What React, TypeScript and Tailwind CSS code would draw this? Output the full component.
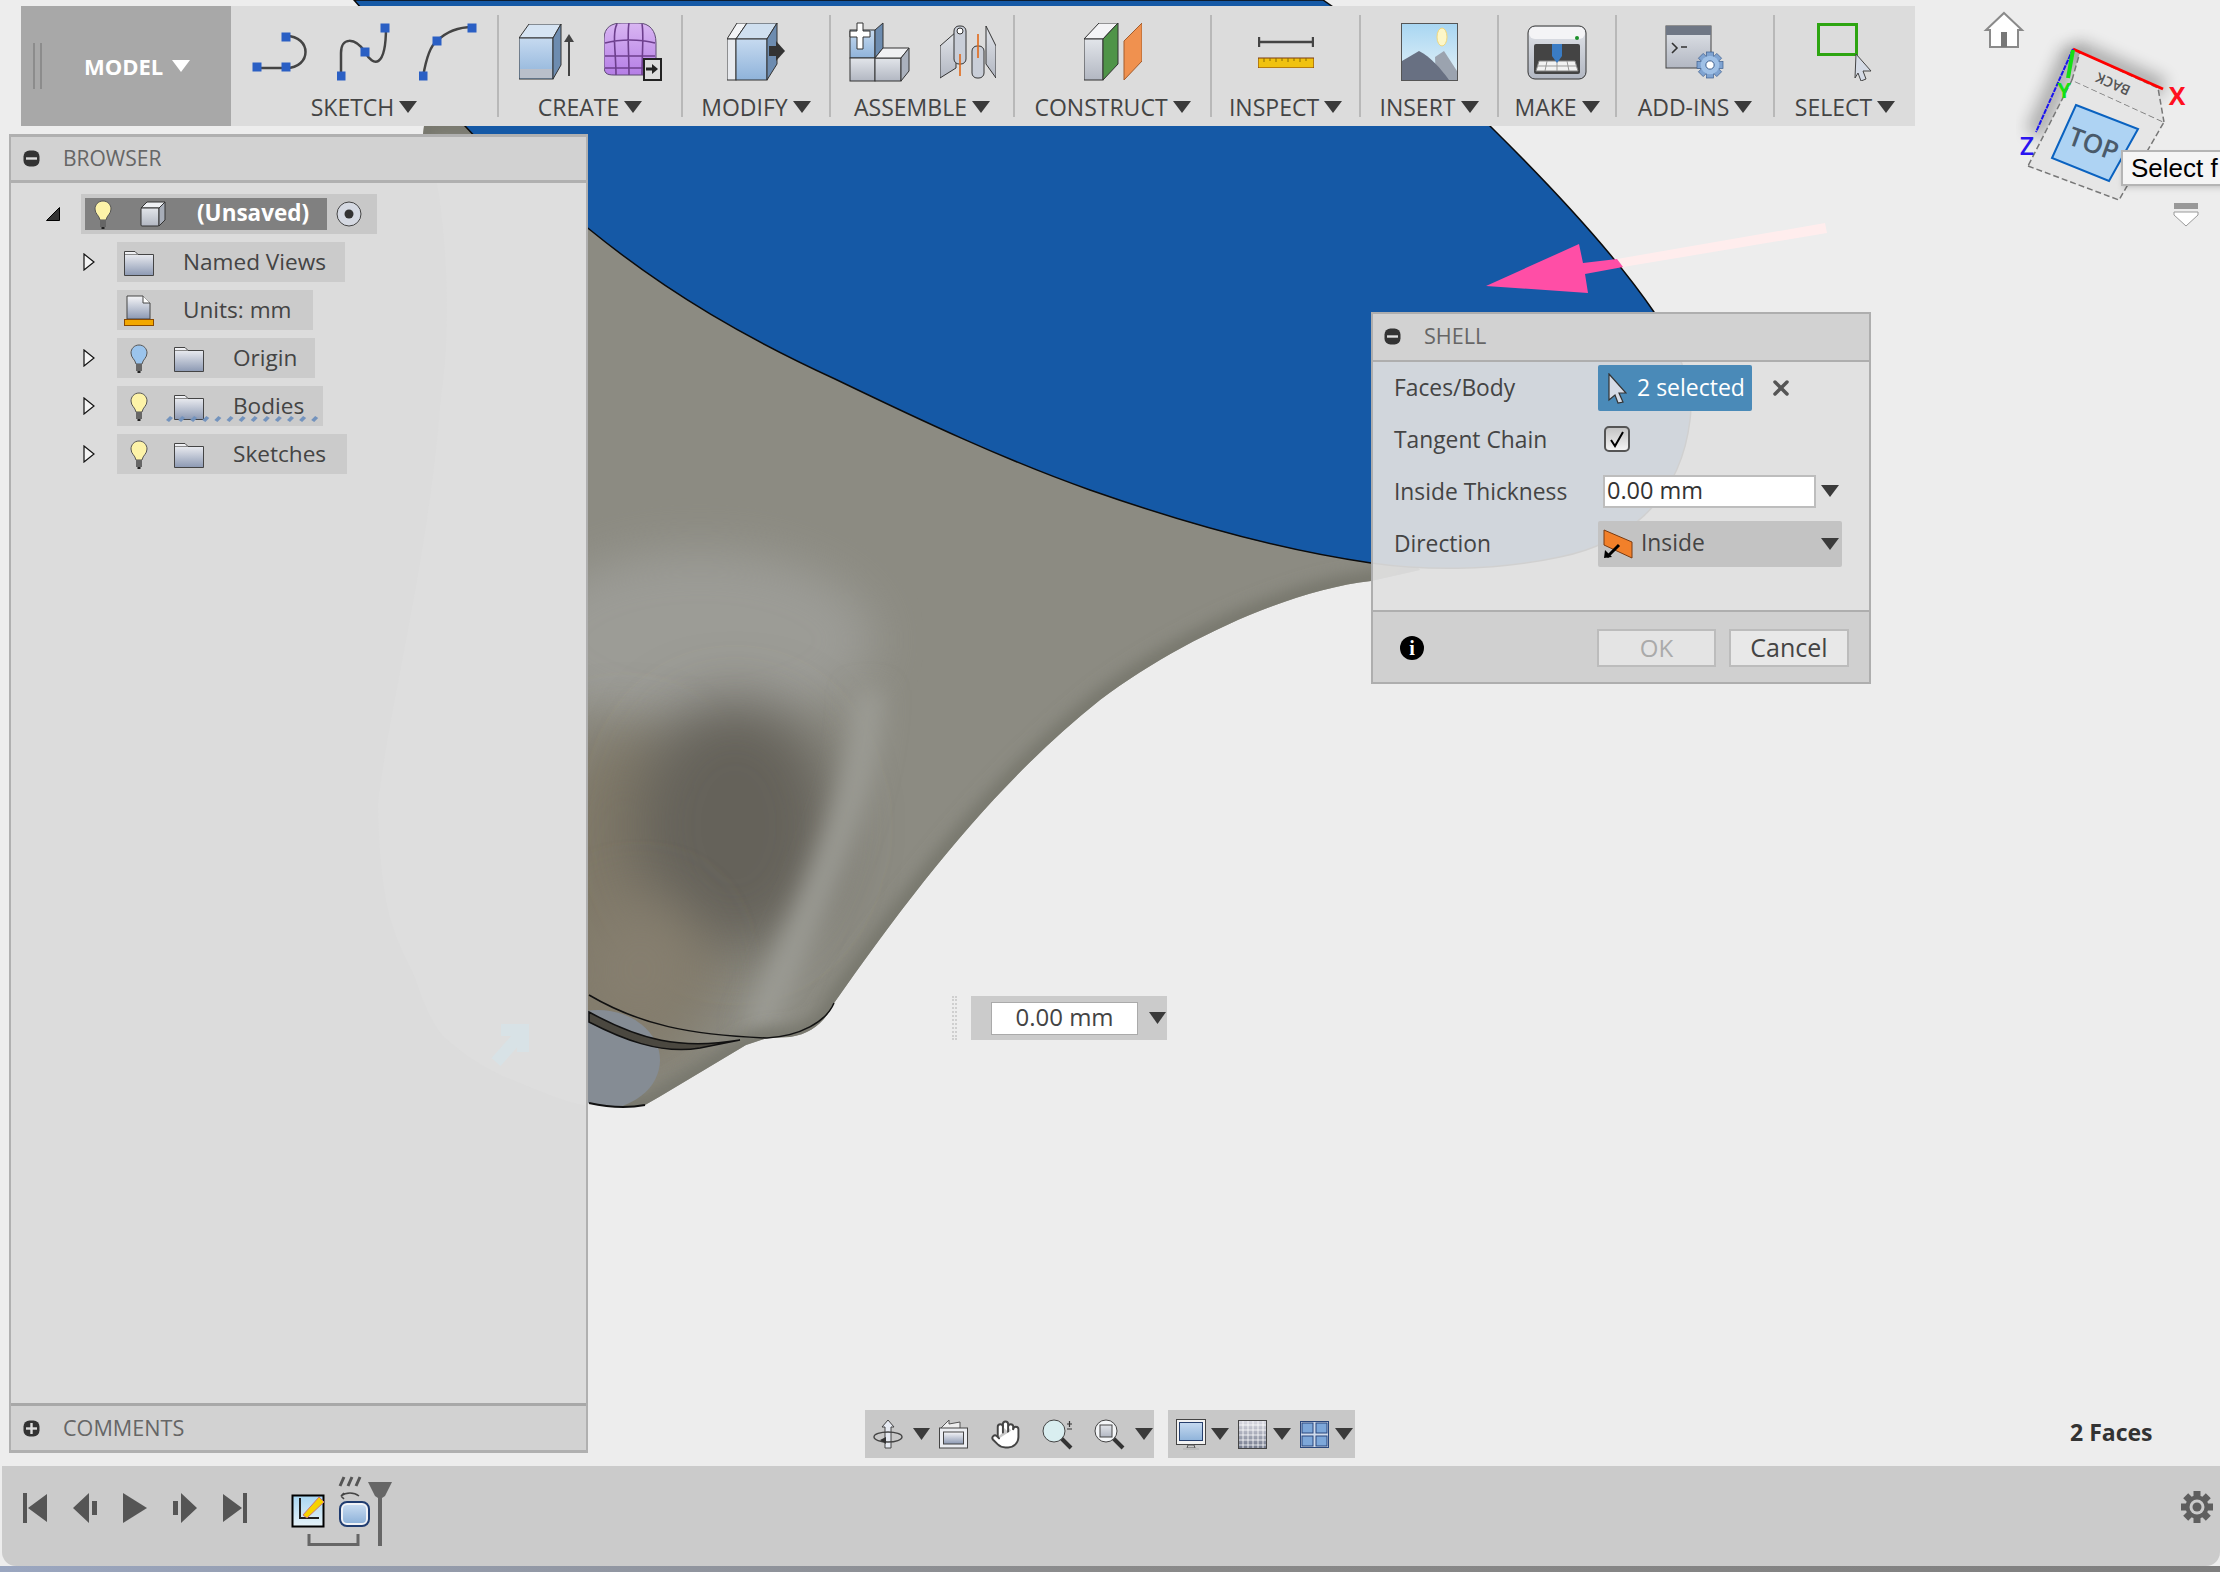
import type { ReactNode } from "react";
import { Hand, X } from "lucide-react";

function Caret({ w = 18, h = 12, color = "#3a3a3a" }: { w?: number; h?: number; color?: string }) {
  return (
    <svg width={w} height={h} viewBox="0 0 18 12" preserveAspectRatio="none" className="shrink-0">
      <polygon points="0,0 18,0 9,12" fill={color} />
    </svg>
  );
}

const Dot = ({ x, y }: { x: number; y: number }) => <rect x={x - 4.5} y={y - 4.5} width="9" height="9" fill="#2a5fc4" />;

function SketchLine() {
  return (
    <svg width="56" height="40" viewBox="0 0 56 40">
      <path d="M4 36H34M34 4C60 4 60 36 34 36" fill="none" stroke="#444" strokeWidth="2.5" />
      <Dot x={5} y={35} />
      <Dot x={34} y={35} />
      <Dot x={34} y={5} />
    </svg>
  );
}

function SketchSpline() {
  return (
    <svg width="53" height="58" viewBox="0 0 53 58">
      <path d="M4 54V30C4 14 18 14 28 29C36 44 49 46 49 4" fill="none" stroke="#444" strokeWidth="2.5" />
      <Dot x={4} y={53} />
      <Dot x={28} y={29} />
      <Dot x={48} y={5} />
    </svg>
  );
}

function SketchArc() {
  return (
    <svg width="58" height="58" viewBox="0 0 58 58">
      <path d="M4 54C7 36 12 22 18 18C28 8 42 4 54 4" fill="none" stroke="#444" strokeWidth="2.5" />
      <Dot x={4} y={53} />
      <Dot x={18} y={18} />
      <Dot x={53} y={5} />
    </svg>
  );
}

function CreateBox() {
  return (
    <svg width="56" height="56" viewBox="0 0 56 56">
      <polygon points="0,14 10,0 42,0 34,14" fill="#d6e4f3" stroke="#333" />
      <rect x="0" y="14" width="34" height="41" fill="url(#steel)" stroke="#333" />
      <rect x="1" y="45" width="32" height="9" fill="#b9bfca" />
      <polygon points="34,14 42,0 42,41 34,55" fill="#6d8cb0" stroke="#333" />
      <path d="M50 52V14" stroke="#444" strokeWidth="2" />
      <polygon points="50,10 55,18 45,18" fill="#444" />
    </svg>
  );
}

function CreateForm() {
  return (
    <svg width="58" height="58" viewBox="0 0 58 58">
      <path d="M0 16C0 4 8 0 18 0H34C46 0 52 8 52 20V44C52 52 46 52 40 52H10C2 52 0 50 0 42Z" fill="url(#purple)" stroke="#5c4a72" />
      <path d="M1 20C16 16 36 16 51 20M1 33H51M1 45H40M13 1C8 10 12 30 12 52M25 0C23 10 25 30 25 52M38 1C40 10 38 30 38 52" fill="none" stroke="#6d3f8d" strokeWidth="1.6" />
      <rect x="40" y="36" width="17" height="21" fill="#dcdcdc" stroke="#222" strokeWidth="2" />
      <path d="M42 46H48" stroke="#222" strokeWidth="3" />
      <polygon points="48,41 54,46 48,51" fill="#222" />
    </svg>
  );
}

function ModifyPress() {
  return (
    <svg width="58" height="58" viewBox="0 0 58 58">
      <polygon points="0,16 10,0 20,0 9,16" fill="#f3f4f6" stroke="#333" />
      <rect x="0" y="16" width="9" height="41" fill="#e8eaee" stroke="#333" />
      <polygon points="9,16 20,0 50,0 40,16" fill="#cfdfef" stroke="#333" />
      <rect x="9" y="16" width="31" height="41" fill="url(#steel)" stroke="#333" />
      <polygon points="40,16 50,0 50,41 40,57" fill="#6d8cb0" stroke="#333" />
      <rect x="42" y="23" width="8" height="10" fill="#333" />
      <polygon points="49,18 58,28 49,38" fill="#333" />
    </svg>
  );
}

function AssembleNew() {
  return (
    <svg width="62" height="60" viewBox="0 0 62 60">
      <rect x="1" y="8" width="25" height="28" fill="url(#steel)" stroke="#333" />
      <polygon points="26,8 34,1 34,26 26,36" fill="#6d8cb0" stroke="#333" />
      <rect x="1" y="36" width="25" height="23" fill="url(#plate)" stroke="#333" />
      <rect x="26" y="36" width="26" height="23" fill="url(#plate)" stroke="#333" />
      <polygon points="26,36 34,26 60,26 52,36" fill="#f0f1f3" stroke="#333" />
      <polygon points="52,36 60,26 60,49 52,59" fill="#aab1bd" stroke="#333" />
      <path d="M8 1H14V9H21V15H14V27H8V15H1V9H8Z" fill="#fff" stroke="#333" />
    </svg>
  );
}

function AssembleJoint() {
  return (
    <svg width="56" height="56" viewBox="0 0 56 56">
      <polygon points="0,22 16,8 16,44 0,54" fill="url(#plate)" stroke="#333" />
      <polygon points="46,2 56,22 56,54 46,40" fill="url(#plate)" stroke="#333" />
      <rect x="14" y="2" width="12" height="38" rx="5" fill="#c9ced8" stroke="#333" />
      <rect x="32" y="22" width="12" height="32" rx="5" fill="#c9ced8" stroke="#333" />
      <circle cx="20" cy="7" r="3" fill="#fff" stroke="#333" />
      <path d="M38 10V34M20 30V52" stroke="#e2691a" strokeWidth="1.6" />
    </svg>
  );
}

function ConstructPlane() {
  return (
    <svg width="58" height="58" viewBox="0 0 58 58">
      <polygon points="0,16 15,0 34,0 19,16" fill="#f4f4f6" stroke="#333" />
      <rect x="0" y="16" width="19" height="41" fill="url(#plate)" stroke="#333" />
      <polygon points="19,16 34,0 34,41 19,57" fill="#4f9448" stroke="#333" />
      <polygon points="40,18 58,0 58,38 40,57" fill="#f0914f" stroke="#a35c2c" />
    </svg>
  );
}

function InspectRuler() {
  return (
    <svg width="56" height="31" viewBox="0 0 56 31">
      <path d="M1 0V10M55 0V10M1 5H55" stroke="#444" strokeWidth="2.4" fill="none" />
      <rect x="0" y="21" width="56" height="10" fill="#f0c210" stroke="#7d3a10" />
      <path d="M6 21v4M12 21v3M18 21v4M24 21v3M30 21v4M36 21v3M42 21v4M48 21v3" stroke="#8a6a00" />
    </svg>
  );
}

function InsertPicture() {
  return (
    <svg width="57" height="58" viewBox="0 0 57 58">
      <rect x="0.5" y="0.5" width="56" height="57" fill="url(#sky)" stroke="#555" />
      <ellipse cx="41" cy="14" rx="5" ry="9" fill="#fdf7c8" stroke="#f1d77a" />
      <path d="M35 57L34 34L43 28L56 48V57Z" fill="#9ba3af" />
      <path d="M1 38L18 28C30 34 40 46 48 57H1Z" fill="#687082" />
    </svg>
  );
}

function MakePrinter() {
  return (
    <svg width="60" height="55" viewBox="0 0 60 55">
      <rect x="1" y="1" width="58" height="53" rx="7" fill="url(#plate)" stroke="#333" />
      <rect x="2" y="2" width="56" height="12" rx="6" fill="#f4f4f6" />
      <circle cx="50" cy="13" r="2" fill="#1c8f2a" />
      <rect x="7" y="19" width="46" height="30" rx="2" fill="#444" />
      <polygon points="12,36 48,36 51,46 9,46" fill="#f2f2f2" stroke="#888" />
      <path d="M11 41H49M20 36L18 46M30 36V46M40 36L42 46" stroke="#999" />
      <polygon points="25,19 35,19 35,31 30,38 25,31" fill="#3a7cc4" />
    </svg>
  );
}

function Gear({ x, y, r }: { x: number; y: number; r: number }) {
  return (
    <g transform={`translate(${x} ${y})`}>
      {[0, 45, 90, 135].map((a) => (
        <rect key={a} x={-r * 0.26} y={-r} width={r * 0.52} height={r * 2} fill="#7fa3d1" stroke="#3d5f8f" strokeWidth="0.7" transform={`rotate(${a})`} />
      ))}
      <circle r={r * 0.72} fill="#9fc0e6" />
      <circle r={r * 0.32} fill="#fff" stroke="#3d5f8f" />
    </g>
  );
}

function AddinsWindow() {
  return (
    <svg width="60" height="56" viewBox="0 0 60 56">
      <rect x="1" y="2" width="45" height="42" fill="url(#plate)" stroke="#444" />
      <rect x="1" y="2" width="45" height="9" fill="#6f7785" />
      <path d="M7 19L12 24L7 29M16 23H22" stroke="#333" strokeWidth="1.6" fill="none" />
      <Gear x={45} y={41} r={13} />
    </svg>
  );
}

function Cursor({ fill = "#d5dbe6", stroke = "#333" }: { fill?: string; stroke?: string }) {
  return (
    <svg width="19" height="31" viewBox="0 0 19 31">
      <path d="M1 1L18 20H11L15 29L10 30L7 22L1 27Z" fill={fill} stroke={stroke} strokeWidth="1.2" />
    </svg>
  );
}

function SelectBox() {
  return (
    <svg width="56" height="58" viewBox="0 0 56 58">
      <rect x="1.5" y="1.5" width="38" height="30" fill="none" stroke="#2da511" strokeWidth="3" />
      <path d="M39 31L54 48H46L49 56L44 58L41 50L38 55Z" fill="#d5dbe6" stroke="#444" />
    </svg>
  );
}

function ToolGroup({ w, label, children, last }: { w: number; label: string; children: ReactNode; last?: boolean }) {
  return (
    <div
      className={`flex h-[102px] shrink-0 flex-col items-center pt-[2px] ${last ? "" : "border-r-2 border-[#b8b8b8]"}`}
      style={{ width: w }}
    >
      <div className="flex h-[70px] shrink-0 items-center gap-[29px]">{children}</div>
      <div className="mt-[6px] flex h-[28px] shrink-0 items-center gap-[5px] text-[23px] leading-none text-[#444]">
        <span>{label}</span>
        <Caret />
      </div>
    </div>
  );
}

function Toolbar() {
  return (
    <div className="ml-[21px] mt-[6px] flex h-[120px] w-[1894px] items-start bg-[#dcdcdc]">
      <div className="flex h-[120px] w-[210px] shrink-0 items-center bg-[#a8a8a8] pb-[1px]">
        <div className="ml-[12px] mr-[42px] flex h-[46px] w-[9px] border-x-2 border-[#8c8c8c]" />
        <span className="text-[22px] font-bold leading-none text-white">MODEL</span>
        <span className="ml-[9px]">
          <Caret color="#fff" />
        </span>
      </div>
      <div className="mt-[9px] flex items-start">
        <ToolGroup w={268} label="SKETCH">
          <SketchLine />
          <SketchSpline />
          <SketchArc />
        </ToolGroup>
        <ToolGroup w={184} label="CREATE">
          <CreateBox />
          <CreateForm />
        </ToolGroup>
        <ToolGroup w={148} label="MODIFY">
          <ModifyPress />
        </ToolGroup>
        <ToolGroup w={184} label="ASSEMBLE">
          <AssembleNew />
          <AssembleJoint />
        </ToolGroup>
        <ToolGroup w={197} label="CONSTRUCT">
          <ConstructPlane />
        </ToolGroup>
        <ToolGroup w={149} label="INSPECT">
          <InspectRuler />
        </ToolGroup>
        <ToolGroup w={138} label="INSERT">
          <InsertPicture />
        </ToolGroup>
        <ToolGroup w={118} label="MAKE">
          <MakePrinter />
        </ToolGroup>
        <ToolGroup w={158} label="ADD-INS">
          <AddinsWindow />
        </ToolGroup>
        <ToolGroup w={140} label="SELECT" last>
          <SelectBox />
        </ToolGroup>
      </div>
    </div>
  );
}

function Bulb({ color }: { color: string }) {
  return (
    <svg width="18" height="29" viewBox="0 0 18 29" className="shrink-0">
      <path d="M9 1C4 1 1 5 1 9C1 14 5 15 6 20H12C13 15 17 14 17 9C17 5 14 1 9 1Z" fill={color} stroke="#555" />
      <rect x="6" y="20" width="6" height="7" fill="#666" />
      <rect x="7.5" y="27" width="3" height="2" fill="#222" />
    </svg>
  );
}

function Folder() {
  return (
    <svg width="30" height="27" viewBox="0 0 30 27" className="shrink-0">
      <path d="M0.5 2.5H11L14 5.5H29.5V26.5H0.5Z" fill="url(#folder)" stroke="#444" />
      <path d="M1 5.5H14" stroke="#888" />
    </svg>
  );
}

function Expander() {
  return (
    <svg width="12" height="18" viewBox="0 0 12 18" className="shrink-0">
      <polygon points="1,1 11,9 1,17" fill="#f4f4f4" stroke="#111" strokeWidth="1.2" />
    </svg>
  );
}

function UnitsIcon() {
  return (
    <svg width="30" height="31" viewBox="0 0 30 31" className="shrink-0">
      <path d="M3 1H19L26 8V24H3Z" fill="url(#folder)" stroke="#444" />
      <path d="M19 1V8H26" fill="#fff" stroke="#444" />
      <rect x="0.5" y="24.5" width="29" height="6" fill="#f2a800" stroke="#8a4a00" />
    </svg>
  );
}

function TreeRow({ label, bulb, width, wavy, expand = true }: { label: string; bulb?: string; width: number; wavy?: boolean; expand?: boolean }) {
  return (
    <div className="flex h-[40px] items-center pl-[72px]">
      <div className="w-[34px] shrink-0">{expand ? <Expander /> : null}</div>
      <div className="relative flex h-[40px] items-center bg-[#cbcbcb]" style={{ width }}>
        {bulb ? (
          <div className="flex items-center">
            <div className="ml-[13px]">
              <Bulb color={bulb} />
            </div>
            <div className="ml-[26px]">
              <Folder />
            </div>
            <span className="ml-[29px] text-[22.6px] leading-none text-[#444]">{label}</span>
          </div>
        ) : (
          <div className="flex items-center">
            <div className="ml-[7px]">{label === "Named Views" ? <Folder /> : <UnitsIcon />}</div>
            <span className="ml-[29px] text-[22.6px] leading-none text-[#444]">{label}</span>
          </div>
        )}
        {wavy ? (
          <svg width="156" height="8" viewBox="0 0 156 8" className="absolute bottom-[3px] left-[49px]">
            {Array.from({ length: 13 }, (_, i) => (
              <polygon key={i} points={`${i * 12.1},5 ${i * 12.1 + 4},1 ${i * 12.1 + 7},3 ${i * 12.1 + 3},7`} fill="#7393bd" />
            ))}
          </svg>
        ) : null}
      </div>
    </div>
  );
}

function CircleBar({ plus }: { plus?: boolean }) {
  return (
    <svg width="17" height="17" viewBox="0 0 17 17" className="shrink-0">
      <rect x="0.5" y="0.5" width="16" height="16" rx="6" fill="#333" />
      <rect x="3" y="7.3" width="11" height="2.4" fill="#ddd" />
      {plus ? <rect x="7.3" y="3" width="2.4" height="11" fill="#ddd" /> : null}
    </svg>
  );
}

function BrowserPanel() {
  return (
    <div className="relative ml-[9px] flex h-[1319px] w-[579px] shrink-0 flex-col overflow-hidden border-x-2 border-t-[3px] border-b-[3px] border-[#b0b0b0] bg-[#dcdcdc]">
      <svg className="pointer-events-none absolute left-0 top-0" width="578" height="1319" viewBox="0 0 578 1319">
        <path d="M415 0C435 60 442 180 430 260C418 420 380 560 367 666C368 720 372 760 382 790C390 815 400 830 405 843C410 860 420 885 432 899C455 920 480 935 502 943C530 955 555 965 576 969V0Z" fill="#dedede" />
        <path d="M485 925L510 897M490 893H512V915" stroke="#d8e2e6" strokeWidth="12" fill="none" />
      </svg>
      <div className="relative flex h-[46px] shrink-0 items-center border-b-[3px] border-[#b0b0b0] bg-[#d2d2d2] pl-[12px]">
        <CircleBar />
        <span className="ml-[23px] text-[21px] leading-none text-[#666]">BROWSER</span>
      </div>
      <div className="relative flex flex-1 flex-col gap-[8px] pt-[11px]">
        <div className="flex h-[40px] items-center pl-[35px]">
          <svg width="14" height="14" viewBox="0 0 14 14" className="mr-[21px] shrink-0">
            <polygon points="13.5,0.5 13.5,13.5 0.5,13.5" fill="#333" stroke="#000" />
          </svg>
          <div className="flex h-[40px] w-[296px] items-center bg-[#c8c8c8] pl-[4px]">
            <div className="flex h-[32px] w-[242px] items-center bg-[#808080]">
              <div className="ml-[9px]">
                <Bulb color="#fdf3a8" />
              </div>
              <svg width="26" height="26" viewBox="0 0 26 26" className="ml-[28px] shrink-0">
                <polygon points="1,7 7,1 25,1 19,7" fill="#eef0f3" stroke="#333" />
                <rect x="1" y="7" width="18" height="18" rx="1" fill="url(#plate)" stroke="#333" />
                <polygon points="19,7 25,1 25,19 19,25" fill="#a7adb8" stroke="#333" />
              </svg>
              <span className="ml-[31px] pb-[1px] text-[22.5px] font-bold leading-none text-white">(Unsaved)</span>
            </div>
            <svg width="26" height="26" viewBox="0 0 26 26" className="ml-[9px] shrink-0">
              <circle cx="13" cy="13" r="12" fill="#d5d9e2" stroke="#444" />
              <circle cx="13" cy="13" r="4.5" fill="#333" />
            </svg>
          </div>
        </div>
        <TreeRow label="Named Views" width={228} />
        <TreeRow label="Units: mm" width={196} expand={false} />
        <TreeRow label="Origin" bulb="#9bc4ec" width={198} />
        <TreeRow label="Bodies" bulb="#fdf3a8" width={206} wavy />
        <TreeRow label="Sketches" bulb="#fdf3a8" width={230} />
      </div>
      <div className="relative flex h-[47px] shrink-0 items-center border-t-[3px] border-[#a8a8a8] bg-[#d2d2d2] pl-[12px]">
        <CircleBar plus />
        <span className="ml-[23px] text-[21.6px] leading-none text-[#666]">COMMENTS</span>
      </div>
    </div>
  );
}

function DirectionIcon() {
  return (
    <svg width="30" height="30" viewBox="0 0 30 30" className="shrink-0">
      <polygon points="1,1 29,13 29,29 1,16" fill="#f2802a" stroke="#7a3a10" />
      <path d="M16 16L4 28" stroke="#000" strokeWidth="3" />
      <polygon points="1,29 9,28 2,21" fill="#000" />
    </svg>
  );
}

function FieldRow({ label, children }: { label: string; children: ReactNode }) {
  return (
    <div className="grid h-[52px] grid-cols-[225px_1fr] items-center">
      <span className="pl-[21px] text-[22.8px] leading-none text-[#444]">{label}</span>
      {children}
    </div>
  );
}

function ShellDialog() {
  return (
    <div className="absolute left-[1371px] top-[312px] flex h-[372px] w-[500px] flex-col border-2 border-[#aeaeae]">
      <div className="flex h-[48px] shrink-0 items-center border-b-2 border-[#aeaeae] bg-[#d2d2d2] pb-[2px] pl-[11px]">
        <CircleBar />
        <span className="ml-[23px] text-[21.6px] leading-none text-[#666]">SHELL</span>
      </div>
      <div className="flex-1 bg-[#e0e0e0]/[0.93]">
        <FieldRow label="Faces/Body">
          <div className="flex items-center">
            <div className="flex h-[46px] w-[154px] items-center rounded-[2px] bg-[#4a8ab8] pl-[10px]">
              <Cursor />
              <span className="ml-[10px] pb-[1px] text-[23px] leading-none text-white">2 selected</span>
            </div>
            <X className="ml-[17px]" size={24} color="#555" strokeWidth={3.5} />
          </div>
        </FieldRow>
        <FieldRow label="Tangent Chain">
          <div className="-mt-[2px] ml-[6px] flex h-[26px] w-[26px] items-center justify-center rounded-[5px] border-2 border-[#555] bg-gradient-to-b from-[#c4c4c4] to-[#f4f4f4]">
            <svg width="18" height="18" viewBox="0 0 18 18">
              <path d="M3 10L7 16L15 2" fill="none" stroke="#000" strokeWidth="2" />
            </svg>
          </div>
        </FieldRow>
        <FieldRow label="Inside Thickness">
          <div className="-mt-[2px] flex items-center">
            <div className="ml-[5px] flex h-[33px] w-[213px] items-center border-2 border-[#bdbdbd] bg-white pb-[1px] pl-[2px] text-[23.5px] leading-none text-[#333]">
              0.00 mm
            </div>
            <span className="ml-[5px]">
              <Caret w={18} h={12} />
            </span>
          </div>
        </FieldRow>
        <FieldRow label="Direction">
          <div className="flex h-[46px] w-[244px] items-center rounded-[2px] bg-[#c3c3c3] pl-[5px]">
            <DirectionIcon />
            <span className="ml-[8px] pb-[1px] text-[22.8px] leading-none text-[#444]">Inside</span>
            <span className="ml-auto mr-[3px]">
              <Caret w={18} h={12} />
            </span>
          </div>
        </FieldRow>
      </div>
      <div className="flex h-[72px] shrink-0 items-center border-t-2 border-[#aeaeae] bg-[#d0d0d0] pl-[27px] pr-[20px] pt-[1px]">
        <span className="flex h-[24px] w-[24px] items-center justify-center rounded-full bg-black font-['Liberation_Serif',serif] text-[20px] font-bold leading-none text-white">
          i
        </span>
        <div className="ml-auto flex gap-[13px]">
          <div className="flex h-[38px] w-[119px] items-center justify-center border-2 border-[#bcbcbc] bg-[#e4e4e4] text-[24px] leading-none text-[#aaa]">
            OK
          </div>
          <div className="flex h-[38px] w-[120px] items-center justify-center border-2 border-[#bcbcbc] bg-[#e8e8e8] text-[25px] leading-none text-[#444]">
            Cancel
          </div>
        </div>
      </div>
    </div>
  );
}

function DimensionInput() {
  return (
    <div className="absolute left-[952px] top-[996px] flex h-[44px] items-center">
      <div className="h-[44px] w-[5px] border-x-2 border-dotted border-[#cfcfcf]" />
      <div className="ml-[14px] flex h-[44px] w-[196px] items-center bg-[#cbcbcb] pl-[20px]">
        <div className="flex h-[33px] w-[147px] items-center justify-center border border-[#aaa] bg-white pb-[2px] text-[24px] leading-none text-[#444]">
          0.00 mm
        </div>
        <span className="ml-[11px]">
          <Caret w={17} h={12} />
        </span>
      </div>
    </div>
  );
}

function Orbit() {
  return (
    <svg width="30" height="30" viewBox="0 0 30 30" className="shrink-0">
      <path d="M15 1L21 8H18V29H12V8H9Z" fill="#e6eaf2" stroke="#444" />
      <ellipse cx="15" cy="18" rx="14" ry="5" fill="none" stroke="#444" strokeWidth="1.4" />
      <polygon points="7,21 13,18 13,25" fill="#333" />
    </svg>
  );
}

function PanWindow() {
  return (
    <svg width="29" height="30" viewBox="0 0 29 30" className="shrink-0">
      <path d="M2 9L10 1L10 5L21 3V9" fill="#eee" stroke="#555" />
      <rect x="0.5" y="9" width="28" height="20" fill="#eceef2" stroke="#444" />
      <rect x="4.5" y="13" width="20" height="12" fill="url(#folder)" stroke="#444" />
    </svg>
  );
}

function ZoomIcon({ fit }: { fit?: boolean }) {
  return (
    <svg width="31" height="31" viewBox="0 0 31 31" className="shrink-0">
      <path d="M19 19L29 29" stroke="#333" strokeWidth="4" />
      <circle cx="12" cy="12" r="11" fill={fit ? "#f4f6f8" : "#d9eef0"} stroke="#444" />
      {fit ? <rect x="6" y="6" width="12" height="12" fill="url(#plate)" stroke="#444" /> : <path d="M25 5H30M27.5 2V8M25 10H30" stroke="#333" strokeWidth="1.2" />}
    </svg>
  );
}

function Monitor() {
  return (
    <svg width="30" height="31" viewBox="0 0 30 31" className="shrink-0">
      <rect x="0.5" y="0.5" width="29" height="25" fill="#f2f2f2" stroke="#444" />
      <rect x="3.5" y="3.5" width="23" height="18" fill="url(#steel)" stroke="#263f6d" />
      <path d="M12 26H18L19 29H11Z" fill="#ccc" stroke="#555" />
      <rect x="7" y="29" width="16" height="2" fill="#bbb" />
    </svg>
  );
}

function GridIcon() {
  return (
    <svg width="29" height="29" viewBox="0 0 29 29" className="shrink-0">
      <rect x="0.5" y="0.5" width="28" height="28" fill="url(#grid)" stroke="#444" />
      <path d="M5 1V28M10 1V28M15 1V28M20 1V28M25 1V28M1 5H28M1 10H28M1 15H28M1 20H28M1 25H28" stroke="#fff" strokeWidth="0.8" />
    </svg>
  );
}

function Viewports() {
  return (
    <svg width="29" height="27" viewBox="0 0 29 27" className="shrink-0">
      <rect x="0.5" y="0.5" width="28" height="26" fill="#cfdbec" stroke="#2a477c" />
      {[
        [2, 2],
        [16, 2],
        [2, 15],
        [16, 15],
      ].map(([x, y]) => (
        <rect key={`${x}-${y}`} x={x} y={y} width="11" height="10" fill="#7da7d9" stroke="#2a477c" />
      ))}
    </svg>
  );
}

function NavBar() {
  return (
    <div className="absolute left-[865px] top-[1410px] flex gap-[14px]">
      <div className="flex h-[48px] w-[289px] items-center bg-[#c8c8c8] pl-[8px]">
        <Orbit />
        <span className="ml-[10px]">
          <Caret w={17} h={12} />
        </span>
        <div className="ml-[9px]">
          <PanWindow />
        </div>
        <Hand className="ml-[22px] shrink-0" size={31} fill="#fff" color="#444" strokeWidth={1.5} />
        <div className="ml-[21px]">
          <ZoomIcon />
        </div>
        <div className="ml-[21px]">
          <ZoomIcon fit />
        </div>
        <span className="ml-[10px]">
          <Caret w={18} h={12} />
        </span>
      </div>
      <div className="flex h-[48px] w-[187px] items-center bg-[#c8c8c8] pl-[8px]">
        <Monitor />
        <span className="ml-[5px]">
          <Caret w={18} h={12} />
        </span>
        <div className="ml-[9px]">
          <GridIcon />
        </div>
        <span className="ml-[6px]">
          <Caret w={18} h={12} />
        </span>
        <div className="ml-[9px]">
          <Viewports />
        </div>
        <span className="ml-[6px]">
          <Caret w={18} h={12} />
        </span>
      </div>
    </div>
  );
}

function Transport({ d, w = 24 }: { d: string; w?: number }) {
  return (
    <svg width={w} height="30" viewBox="0 0 24 30" className="shrink-0">
      <path d={d} fill="#555" />
    </svg>
  );
}

function Timeline() {
  return (
    <div className="flex h-[100px] items-start rounded-b-[14px] bg-[#cbcbcb]">
      <div className="mt-[27px] flex items-center gap-[26px] pl-[21px]">
        <Transport d="M0 0H4V30H0ZM24 1V29L5 15Z" />
        <Transport d="M16 0V30L0 15ZM19 8H24V22H19Z" />
        <Transport d="M0 0L24 15L0 30Z" />
        <Transport d="M8 0V30L24 15ZM0 8H5V22H0Z" />
        <Transport d="M20 0H24V30H20ZM0 1V29L19 15Z" />
      </div>
      <svg width="104" height="80" viewBox="0 0 104 80" className="ml-[44px] mt-[8px] shrink-0">
        <rect x="1.5" y="21.5" width="31" height="31" fill="url(#sky)" stroke="#000" strokeWidth="2" />
        <path d="M9 24V44H28" fill="none" stroke="#222" strokeWidth="2" />
        <path d="M12 41L28 23L33 28L16 44Z" fill="#f6d200" stroke="#c77" />
        <path d="M50 22C55 18 63 18 68 22M50 22L53 19M50 22L53 25" fill="none" stroke="#444" strokeWidth="1.6" />
        <rect x="49" y="28" width="29" height="24" rx="7" fill="#f0f2f6" stroke="#1f3c70" strokeWidth="2" />
        <rect x="52" y="31" width="23" height="18" rx="4" fill="url(#steel)" />
        <path d="M49 12L53 3M57 12L61 3M65 12L69 3" stroke="#555" strokeWidth="3" />
        <path d="M77 8H101L94 22L91 24H87L84 22Z" fill="#666" />
        <rect x="87" y="22" width="4" height="50" fill="#666" />
        <path d="M18 60V70.5H67V60" fill="none" stroke="#666" strokeWidth="3" />
      </svg>
      <svg width="32" height="32" viewBox="0 0 32 32" className="ml-auto mr-[7px] mt-[25px] shrink-0">
        <g fill="#5e5e5e">
          {[0, 45, 90, 135].map((a) => (
            <rect key={a} x="12.5" y="0" width="7" height="32" transform={`rotate(${a} 16 16)`} />
          ))}
          <circle cx="16" cy="16" r="11.5" />
        </g>
        <circle cx="16" cy="16" r="7.5" fill="#cbcbcb" />
        <circle cx="16" cy="16" r="4.5" fill="#5e5e5e" />
      </svg>
    </div>
  );
}

// the 3d model, the pink arrow and the view cube
function Viewport() {
  const silhouette =
    "M424 126L1000 126L1420 570L1371 581C1290 590 1180 640 1100 700C1000 780 920 880 832 1006C826 1020 812 1034 790 1037L767 1038L746 1045L659 1097L645 1105Q620 1110 589 1103L415 1103L415 200Z";
  return (
    <svg className="absolute inset-0" width="2220" height="1572" viewBox="0 0 2220 1572">
      <defs>
        <linearGradient id="steel" x1="0" y1="0" x2="0" y2="1">
          <stop offset="0" stopColor="#c6daf0" />
          <stop offset="1" stopColor="#8fb3da" />
        </linearGradient>
        <linearGradient id="plate" x1="0" y1="0" x2="0" y2="1">
          <stop offset="0" stopColor="#e2e5ea" />
          <stop offset="1" stopColor="#b2b7c2" />
        </linearGradient>
        <linearGradient id="folder" x1="0" y1="0" x2="0" y2="1">
          <stop offset="0" stopColor="#f6f6f8" />
          <stop offset="1" stopColor="#8c99b3" />
        </linearGradient>
        <linearGradient id="sky" x1="0" y1="0" x2="0" y2="1">
          <stop offset="0" stopColor="#a8d6f2" />
          <stop offset="1" stopColor="#e6f2f8" />
        </linearGradient>
        <linearGradient id="grid" x1="0" y1="0" x2="0" y2="1">
          <stop offset="0" stopColor="#dcdce4" />
          <stop offset="1" stopColor="#70778a" />
        </linearGradient>
        <linearGradient id="purple" x1="0" y1="0" x2="0" y2="1">
          <stop offset="0" stopColor="#d9b6f2" />
          <stop offset="1" stopColor="#b57ee6" />
        </linearGradient>
        <clipPath id="bodyClip">
          <path d={silhouette} />
        </clipPath>
        <filter id="blur8" x="-50%" y="-50%" width="200%" height="200%">
          <feGaussianBlur stdDeviation="8" />
        </filter>
        <filter id="blur12" x="-50%" y="-50%" width="200%" height="200%">
          <feGaussianBlur stdDeviation="12" />
        </filter>
        <filter id="blur24" x="-50%" y="-50%" width="200%" height="200%">
          <feGaussianBlur stdDeviation="24" />
        </filter>
        <filter id="blur30" x="-50%" y="-50%" width="200%" height="200%">
          <feGaussianBlur stdDeviation="30" />
        </filter>
      </defs>
      <g clipPath="url(#bodyClip)">
        <rect x="400" y="126" width="1020" height="990" fill="#8c8b82" />
        <ellipse cx="700" cy="640" rx="175" ry="90" fill="#9e9e99" opacity="0.9" filter="url(#blur24)" />
        <ellipse cx="625" cy="900" rx="100" ry="170" fill="#7f7868" filter="url(#blur30)" />
        <ellipse cx="735" cy="825" rx="100" ry="125" fill="#65625a" filter="url(#blur30)" />
        <ellipse cx="640" cy="970" rx="60" ry="70" fill="#867f70" filter="url(#blur30)" />
        <path d="M868 690C870 780 825 880 755 1032" fill="none" stroke="#9c9c95" strokeWidth="30" filter="url(#blur12)" />
        <path d={silhouette} fill="none" stroke="#75746b" strokeWidth="18" filter="url(#blur8)" />
        <ellipse cx="598" cy="1060" rx="62" ry="50" fill="#858c94" />
      </g>
      <path d="M589 1012C640 1040 680 1050 740 1040L700 1048C660 1055 620 1038 589 1022Z" fill="#4b4840" stroke="#111" strokeWidth="1.5" />
      <path d="M589 995C640 1025 690 1035 767 1038C800 1036 826 1022 834 1003" fill="none" stroke="#111" strokeWidth="1.5" />
      <path d="M589 1103Q620 1110 645 1105" fill="none" stroke="#111" strokeWidth="2" />
      <path
        d="M354 0L465 126C500 165 545 195 589 229C670 295 750 340 835 379C920 420 1005 460 1090 490C1190 525 1280 550 1371 563C1420 570 1490 572 1560 557C1620 545 1680 505 1690 420C1695 385 1675 340 1654 312C1620 262 1560 195 1490 126C1440 80 1380 40 1323 0Z"
        fill="#1559a6"
        stroke="#0b0b0b"
        strokeWidth="1.5"
      />
      <polygon points="1617,259 1825,223 1827,233 1623,267" fill="#ffeded" />
      <polygon points="1486,286 1579,244 1583,263 1617,259 1623,267 1585,274 1588,293" fill="#ff4ea6" />

      <path d="M2073 49L2163 89" stroke="#000" strokeWidth="20" opacity="0.28" filter="url(#blur8)" />
      <path d="M2073 49L2035 135" stroke="#000" strokeWidth="20" opacity="0.28" filter="url(#blur8)" />
      <polygon points="2028,166 2119,200 2164,122 2072,80" fill="#e6e6e6" stroke="#777" strokeWidth="1.5" strokeDasharray="6 3" />
      <path d="M2072 80L2080 52L2158 88L2164 122" fill="#e3e3e3" stroke="#777" strokeWidth="1.5" strokeDasharray="6 3" />
      <polygon points="2076,105 2138,129 2109,181 2052,158" fill="#aed3f3" stroke="#0a62c0" strokeWidth="2" />
      <text x="2094" y="153" textAnchor="middle" transform="rotate(20 2094 143)" fontFamily="Open Sans, sans-serif" fontSize="26" fontWeight="600" fill="#4a5a6a">
        TOP
      </text>
      <text x="2113" y="89" textAnchor="middle" transform="rotate(204 2113 84)" fontFamily="Open Sans, sans-serif" fontSize="14" fontWeight="600" fill="#555">
        BACK
      </text>
      <path d="M2073 49L2163 89" stroke="#ff0000" strokeWidth="3" />
      <path d="M2073 49L2036 132" stroke="#1a14f0" strokeWidth="2" strokeDasharray="5 1" />
      <path d="M2073 50L2068 78" stroke="#14e014" strokeWidth="4" />
      <text x="2177" y="105" textAnchor="middle" fontFamily="Open Sans, sans-serif" fontSize="25" fontWeight="700" fill="#ff1020">
        X
      </text>
      <text x="2027" y="155" textAnchor="middle" fontFamily="Open Sans, sans-serif" fontSize="25" fontWeight="600" fill="#2a14f0">
        Z
      </text>
      <text x="2064" y="98" textAnchor="middle" fontFamily="Open Sans, sans-serif" fontSize="22" fontWeight="700" fill="#14e014">
        Y
      </text>
      <path d="M2004 13L2022 30H2018V47H1990V30H1986Z" fill="#fff" stroke="#8a8a8a" strokeWidth="2" />
      <rect x="2001" y="32" width="6" height="15" fill="#777" />
      <path d="M2174 203H2198V209H2174Z" fill="#999" />
      <path d="M2174 212H2198V215L2186 226L2174 215Z" fill="#fff" stroke="#999" />
    </svg>
  );
}

export default function App() {
  return (
    <div className="relative h-[1572px] w-[2220px] overflow-hidden bg-[#ededed] font-['Open_Sans',sans-serif]">
      <Viewport />
      <div className="relative flex h-full flex-col">
        <Toolbar />
        <div className="mt-[8px]">
          <BrowserPanel />
        </div>
        <div className="mt-[13px] pl-[2px]">
          <Timeline />
        </div>
        <div className="h-[6px] bg-gradient-to-r from-[#9aa6c0] via-[#8a8a8a] to-[#7f7f7f]" />
      </div>
      <ShellDialog />
      <DimensionInput />
      <NavBar />
      <span className="absolute left-[2070px] top-[1421px] text-[23px] font-bold leading-none text-[#333]">2 Faces</span>
      <div className="absolute left-[2121px] top-[150px] flex h-[36px] w-[120px] items-center border-2 border-[#b5b5b5] bg-[#f5f5f5] pl-[8px] font-['Liberation_Sans',sans-serif] text-[26px] leading-none text-black shadow-md">
        Select f
      </div>
    </div>
  );
}
